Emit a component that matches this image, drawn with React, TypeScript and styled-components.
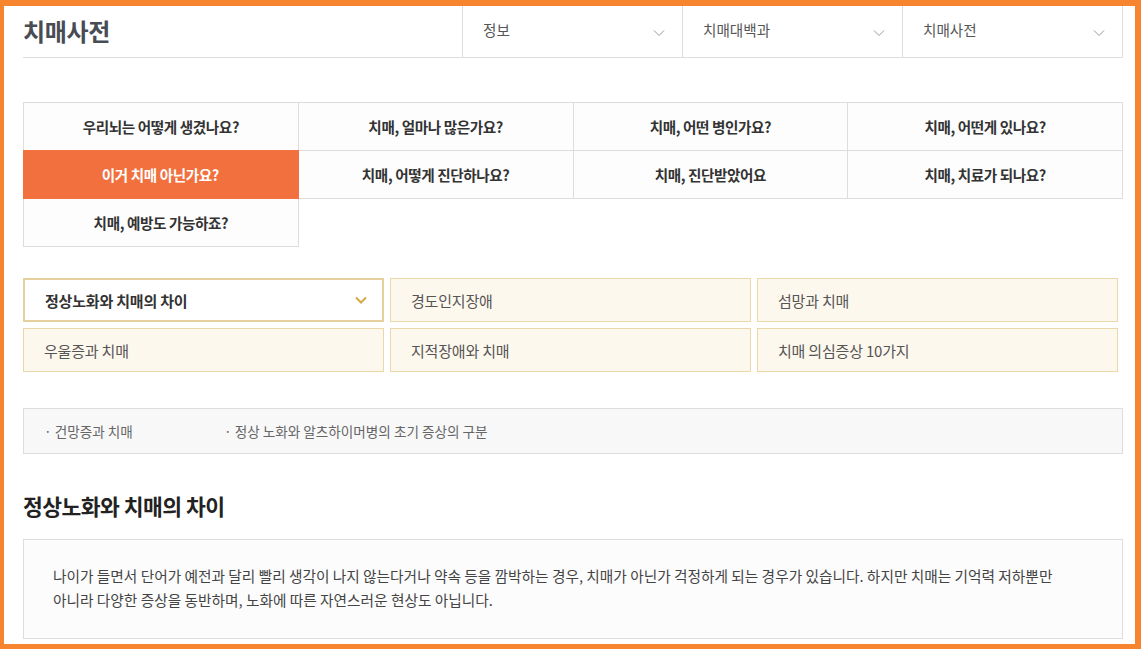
import styled, { createGlobalStyle } from "styled-components"

const GlobalStyle = createGlobalStyle`
	html, body {
		margin: 0;
		padding: 0;
		background: #ffffff;
	}
	body {
		font-family: "Noto Sans CJK KR", "Noto Sans", sans-serif;
		color: #333;
		word-break: keep-all;
	}
	* {
		box-sizing: border-box;
	}
`

const mainTabs = [
	"우리뇌는 어떻게 생겼나요?",
	"치매, 얼마나 많은가요?",
	"치매, 어떤 병인가요?",
	"치매, 어떤게 있나요?",
	"이거 치매 아닌가요?",
	"치매, 어떻게 진단하나요?",
	"치매, 진단받았어요",
	"치매, 치료가 되나요?",
	"치매, 예방도 가능하죠?",
]

const subTabs = [
	"정상노화와 치매의 차이",
	"경도인지장애",
	"섬망과 치매",
	"우울증과 치매",
	"지적장애와 치매",
	"치매 의심증상 10가지",
]

const menus = ["정보", "치매대백과", "치매사전"]

const Chevron = ({ color, weight }: { color: string; weight: number }) => (
	<svg width="12" height="8" viewBox="0 0 12 8" fill="none">
		<path d="M1 1.5 L6 6.5 L11 1.5" stroke={color} strokeWidth={weight} />
	</svg>
)

export default function App() {
	return (
		<>
			<GlobalStyle />
			<Frame>
				<Header>
					<Title>치매사전</Title>
					<Menus>
						{menus.map((m) => (
							<Menu key={m}>
								<span>{m}</span>
								<Chevron color="#9a9a9a" weight={1} />
							</Menu>
						))}
					</Menus>
				</Header>

				<TabGrid>
					{mainTabs.map((t, i) => (
						<Tab key={t} $active={i === 4}>
							{t}
						</Tab>
					))}
				</TabGrid>

				<SubGrid>
					{subTabs.map((t, i) => (
						<SubTab key={t} $active={i === 0}>
							<span>{t}</span>
							{i === 0 && <Chevron color="#d7a843" weight={2} />}
						</SubTab>
					))}
				</SubGrid>

				<LinkBox>
					<LinkItem>· 건망증과 치매</LinkItem>
					<LinkItem>· 정상 노화와 알츠하이머병의 초기 증상의 구분</LinkItem>
				</LinkBox>

				<Heading>정상노화와 치매의 차이</Heading>

				<ContentBox>
					나이가 들면서 단어가 예전과 달리 빨리 생각이 나지 않는다거나 약속 등을
					깜박하는 경우, 치매가 아닌가 걱정하게 되는 경우가 있습니다. 하지만
					치매는 기억력 저하뿐만 아니라 다양한 증상을 동반하며, 노화에 따른
					자연스러운 현상도 아닙니다.
				</ContentBox>
			</Frame>
		</>
	)
}

const Frame = styled.div`
	width: 1141px;
	height: 649px;
	border-style: solid;
	border-color: #f7852f;
	border-width: 6px 6px 5px 4px;
	padding: 0 12px 0 19px;
	overflow: hidden;
`

const Header = styled.div`
	display: flex;
	align-items: stretch;
	justify-content: space-between;
	height: 52px;
	border-bottom: 1px solid #dddddd;
`

const Title = styled.h1`
	margin: 0;
	display: flex;
	align-items: center;
	padding-bottom: 2px;
	font-size: 24px;
	font-weight: 700;
	color: #474c55;
	letter-spacing: -0.3px;
`

const Menus = styled.div`
	display: flex;
	border-right: 1px solid #dddddd;
`

const Menu = styled.div`
	width: 220px;
	display: flex;
	align-items: center;
	justify-content: space-between;
	padding: 0 17px 0 20px;
	border-left: 1px solid #dddddd;
	font-size: 14.6px;
	color: #555;

	span {
		margin-top: -4px;
	}
	svg {
		margin-top: 3px;
	}
`

const TabGrid = styled.div`
	display: grid;
	grid-template-columns: repeat(4, 1fr);
	margin-top: 44px;
	border-top: 1px solid #dddddd;
	border-left: 1px solid #dddddd;
`

const Tab = styled.div<{ $active?: boolean }>`
	height: 48px;
	display: flex;
	align-items: center;
	justify-content: center;
	border-right: 1px solid #dddddd;
	border-bottom: 1px solid #dddddd;
	background: ${(p) => (p.$active ? "#f2703d" : "#fdfdfd")};
	color: ${(p) => (p.$active ? "#ffffff" : "#333333")};
	font-size: 14.6px;
	font-weight: 700;
	letter-spacing: -0.4px;
	${(p) => p.$active && "margin: -1px 0 0 -1px; border-color: #f2703d; height: 49px;"}
`

const SubGrid = styled.div`
	display: grid;
	grid-template-columns: repeat(3, 361px);
	gap: 6px;
	margin-top: 31px;
`

const SubTab = styled.div<{ $active?: boolean }>`
	height: 44px;
	display: flex;
	align-items: center;
	justify-content: space-between;
	padding: 0 15px 0 20px;
	border: ${(p) => (p.$active ? "2px solid #e6d19e" : "1px solid #ecd7a8")};
	background: ${(p) => (p.$active ? "#ffffff" : "#fdf8ee")};
	font-size: 15px;
	font-weight: ${(p) => (p.$active ? 700 : 400)};
	color: ${(p) => (p.$active ? "#333" : "#555")};
	letter-spacing: -0.2px;
`

const LinkBox = styled.div`
	display: flex;
	align-items: center;
	height: 46px;
	margin-top: 36px;
	padding: 0 20px;
	border: 1px solid #dddddd;
	background: #f8f8f8;
`

const LinkItem = styled.span`
	font-size: 13.6px;
	color: #666;
	min-width: 180px;
`

const Heading = styled.h2`
	margin: 36px 0 0;
	font-size: 21.5px;
	font-weight: 700;
	color: #222;
	letter-spacing: -0.5px;
`

const ContentBox = styled.div`
	margin-top: 18px;
	height: 100px;
	padding: 24px 40px 0 29px;
	border: 1px solid #dddddd;
	background: #fcfcfc;
	font-size: 14.7px;
	line-height: 24px;
	color: #444;
`
